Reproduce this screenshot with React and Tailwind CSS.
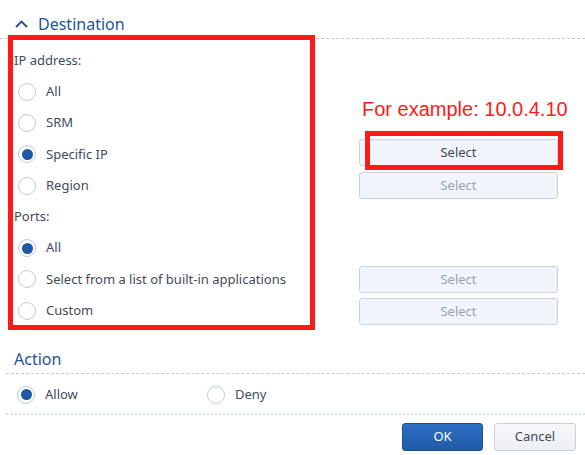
function Radio({ checked }) {
  return (
    <span className="w-[18px] h-[18px] shrink-0 rounded-full border border-[#c2cbd6] bg-white flex items-center justify-center">
      {checked && <span className="w-[11px] h-[11px] rounded-full bg-[#1f59a3]" />}
    </span>
  );
}

function Option({ label, checked }) {
  return (
    <div className="h-[31.25px] flex items-center gap-[10px] pl-[4px]">
      <Radio checked={checked} />
      <span>{label}</span>
    </div>
  );
}

function SelectButton({ active, className = "", children }) {
  return (
    <div
      className={`relative w-[199px] h-[27px] rounded-[3px] border border-[#c9d2dd] bg-[#f1f5fb] flex items-center justify-center ${
        active ? "text-[#3e4856]" : "text-[#9aa3ae]"
      } ${className}`}
    >
      Select
      {children}
    </div>
  );
}

export default function App() {
  return (
    <div className="w-[585px] h-[455px] bg-white overflow-hidden font-['Noto_Sans',sans-serif] text-[13px] text-[#414b5a]">
      {/* Destination header */}
      <div className="h-[39px] pt-[10px] pl-[15px] flex items-center gap-[10px] border-b border-dashed border-[#c3cad3]">
        <svg width="13" height="8" viewBox="0 0 13 8" fill="none">
          <polyline points="1,7 6.5,1.5 12,7" stroke="#1f4f8e" strokeWidth="1.8" />
        </svg>
        <span className="text-[16px] text-[#1f5597]">Destination</span>
      </div>

      <div className="flex -mt-[4px]">
        {/* annotated left column */}
        <div className="relative z-10 ml-[8px] w-[307px] h-[295px] border-[5px] border-[#ff1a1a] pt-[5px] pl-[1px]">
          <div className="h-[31.25px] flex items-center">IP address:</div>
          <Option label="All" />
          <Option label="SRM" />
          <Option label="Specific IP" checked />
          <Option label="Region" />
          <div className="h-[31.25px] flex items-center">Ports:</div>
          <Option label="All" checked />
          <Option label="Select from a list of built-in applications" />
          <Option label="Custom" />
        </div>

        {/* right column */}
        <div className="ml-[44px] w-[199px] flex flex-col">
          <div className="mt-[62px] ml-[3px] h-[24px] leading-[24px] text-[20px] text-[#ff1a1a] font-['Liberation_Sans',sans-serif] whitespace-nowrap">
            For example: 10.0.4.10
          </div>
          <SelectButton active className="mt-[18px]">
            <div className="absolute left-[5px] -top-[9px] w-[198px] h-[39px] border-[5px] border-[#ff1a1a]" />
          </SelectButton>
          <SelectButton className="mt-[6px] h-[26px]" />
          <SelectButton className="mt-[67px]" />
          <SelectButton className="mt-[5px]" />
        </div>
      </div>

      {/* Action */}
      <div className="ml-[6px]">
        <div className="h-[44px] pt-[15px] pl-[8px] flex items-center border-b border-dashed border-[#c3cad3] text-[16px] text-[#1f5597]">
          Action
        </div>
        <div className="h-[41px] pt-[2px] flex items-center pl-[11px] border-b-2 border-dotted border-[#d9e1ea]">
          <div className="w-[190px] flex items-center gap-[10px]">
            <Radio checked />
            <span>Allow</span>
          </div>
          <div className="flex items-center gap-[10px]">
            <Radio />
            <span>Deny</span>
          </div>
        </div>
      </div>

      {/* footer */}
      <div className="pt-[8px] pr-[9px] flex justify-end gap-[11px]">
        <button className="w-[81px] h-[28px] rounded-[3px] border border-[#1b4f94] bg-gradient-to-b from-[#2d6ec3] to-[#1f5aa8] text-white text-[13px]">
          OK
        </button>
        <button className="w-[82px] h-[28px] rounded-[3px] border border-[#c8cfd7] bg-gradient-to-b from-[#f7f8fa] to-[#eceff3] text-[#3f4a58] text-[13px]">
          Cancel
        </button>
      </div>
    </div>
  );
}
